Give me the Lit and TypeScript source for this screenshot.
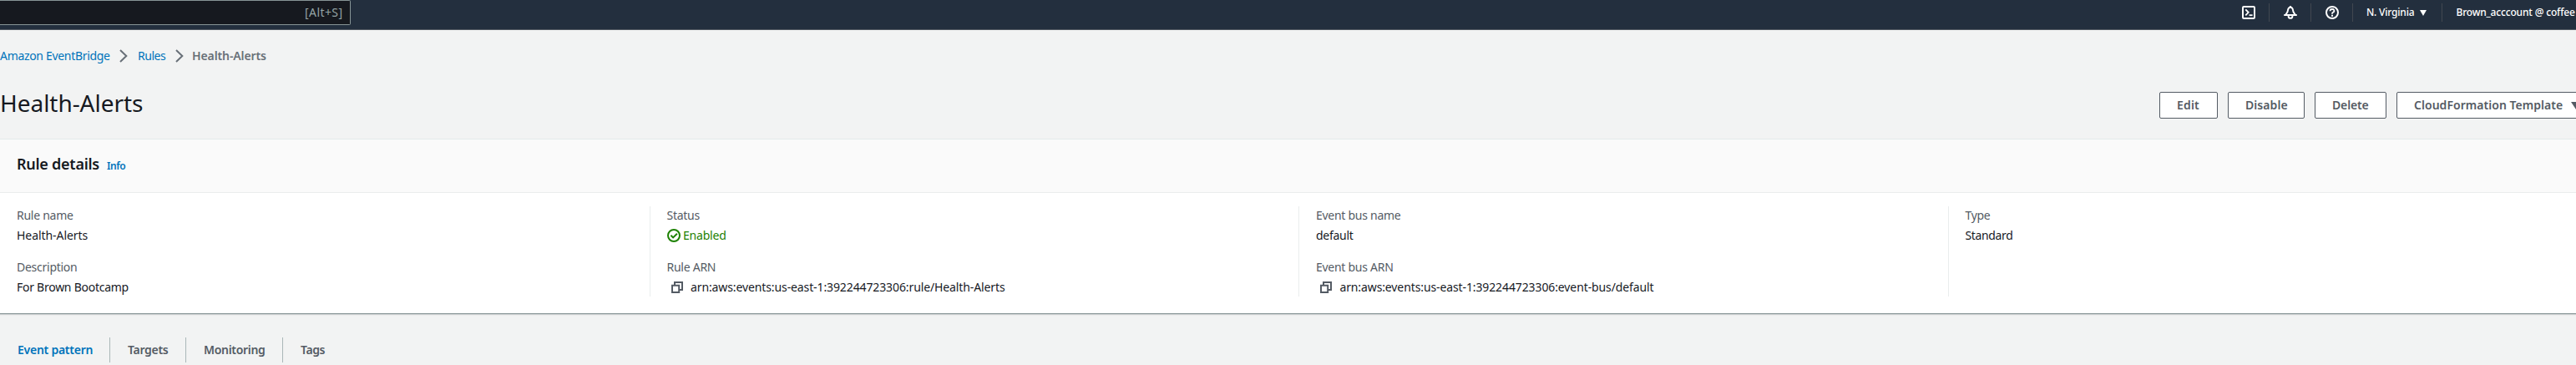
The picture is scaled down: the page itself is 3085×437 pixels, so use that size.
import { LitElement, html, css, svg, TemplateResult } from 'lit';
import { customElement } from 'lit/decorators.js';

const chevron = html`<svg class="chevron" width="10" height="16" viewBox="0 0 10 16" fill="none" stroke="#687078" stroke-width="2"><path d="M1 1l7.3 7L1 15"/></svg>`;
const icon = (body: TemplateResult) => html`<svg class="icon" width="16" height="16" viewBox="0 0 16 16" fill="none" stroke="currentColor" stroke-width="2">${body}</svg>`;
const terminal = icon(svg`<rect x="1" y="1" width="14" height="14" rx="1.2"/><path d="M4.3 4.3L7.7 7.8 4.3 11.3" stroke-width="1.8"/><path d="M8.6 11.2h4" stroke-width="1.8"/>`);
const bell = icon(svg`<path d="M8 1.8C5.6 1.8 5.1 3.8 4.8 6 4.5 8.2 3 9 2 11h12c-1-2-2.5-2.8-2.8-5C10.9 3.8 10.4 1.8 8 1.8z" stroke-width="1.9"/><path d="M0.3 11h15.4M8 0v2" stroke-width="1.8"/><path d="M5.6 11.4v1a2.4 2.4 0 0 0 4.8 0v-1" stroke-width="1.9"/>`);
const help = icon(svg`<circle cx="8" cy="8" r="7"/><path d="M5.5 6.2C5.5 4.7 6.5 4 8 4s2.5.8 2.5 2S9.4 7.7 8.6 8C8.1 8.2 8 8.6 8 9.7" stroke-width="1.8"/><path d="M7 10.8h2v2H7z" fill="currentColor" stroke="none"/>`);
const check = icon(svg`<circle cx="8" cy="8" r="7"/><path d="M4.4 7.8l2.7 2.6 4.8-4.6"/>`);
const copy = html`<svg class="copy" width="14" height="14" viewBox="0 0 14 14" fill="none" stroke="#545b64" stroke-width="2"><path d="M1 4.8h8.2V13H1z"/><path d="M4 4.5V1h9v9H9.5"/></svg>`;

@customElement('app-root')
export class AppRoot extends LitElement {
  static styles = css`
    :host { display: block; width: 100%; height: 437px; overflow: hidden; background: #f2f3f3; color: #16191f;
      font: 14px/22px "Noto Sans", sans-serif; white-space: nowrap; }
    * { box-sizing: border-box; }
    svg { display: block; flex: none; }
    h1, h2 { margin: 0; }
    .nav { display: flex; height: 36px; background: #232f3e; border-bottom: 1px solid #545b64; color: #fff; }
    .search { width: 420px; height: 30px; padding: 3px 8.5px 0 0; text-align: right; background: #16191f;
      border: 1px solid #879596; border-left: 0; border-radius: 0 2px 2px 0; color: #95a5a6; letter-spacing: .43px; }
    .tools { display: flex; width: 417px; height: 22px; margin: 4px 0 0 auto; font-size: 12px; font-weight: 500; line-height: 22px; }
    .tool { display: flex; flex: none; width: 50px; padding: 3px 0 0 17px; border-right: 1px solid #414750; }
    .region { display: flex; flex: none; width: 107px; padding-left: 16px; border-right: 1px solid #414750; letter-spacing: -.2px; }
    .region svg { margin: 8px 0 0 7px; }
    .account { padding-left: 16.5px; letter-spacing: -.18px; }
    .crumbs { display: flex; height: 58px; padding-top: 20px; color: #0073bb; }
    .crumb { letter-spacing: -.32px; }
    .chevron { margin: 3px 12px 0 11px; }
    .rules { width: 34px; letter-spacing: -.47px; }
    .current { margin-left: -2px; color: #687078; font-weight: 600; letter-spacing: -.11px; }
    .first { width: 132px; }
    .head { display: flex; justify-content: space-between; height: 72px; }
    .title { padding-top: 11px; font-size: 28px; font-weight: 400; line-height: 36px; letter-spacing: -.04px; }
    .actions { display: flex; gap: 12px; width: 499px; padding-top: 16px; }
    .btn { display: flex; flex: none; height: 32px; padding: 4px 0 0 20px; border: 1px solid #545b64; border-radius: 2px; background: #fff;
      color: #545b64; font-weight: 600; }
    .edit { width: 70px; letter-spacing: .15px; }
    .disable { width: 92px; letter-spacing: .08px; }
    .delete { width: 86px; letter-spacing: -.15px; }
    .template { width: 244px; letter-spacing: .04px; }
    .template svg { margin: 7px 0 0 10px; }
    .panel { height: 210px; background: #fff; border-top: 1px solid #e3ebea; border-bottom: 1px solid #879596; box-shadow: 0 1px 1px rgba(0,28,36,.15); }
    .panel-head { display: flex; align-items: baseline; height: 64px; padding: 17px 0 0 20px; background: #fafafa; border-bottom: 1px solid #eaeded; }
    .panel-title { font-size: 18px; font-weight: 600; line-height: 24px; letter-spacing: -.26px; }
    .info { margin-left: 9px; color: #0073bb; font-size: 12px; font-weight: 600; letter-spacing: -.45px; }
    .columns { display: grid; grid-template-columns: 778px 777.4px 777.6px 1fr; padding-top: 16px; }
    .column { display: grid; align-content: start; gap: 16px; height: 108px; padding-left: 20px; letter-spacing: -.26px; }
    .column + .column { padding-left: 19.5px; border-left: 1px solid #eaeded; }
    .label { margin-bottom: 2px; color: #545b64; }
    .value { display: flex; height: 22px; }
    .loose { letter-spacing: -.06px; }
    .tight { letter-spacing: -.36px; }
    .arn { padding-left: 5px; letter-spacing: -.11px; }
    .arn svg { margin: 4px 9.5px 0 0; }
    .ok { color: #1d8102; letter-spacing: -.2px; }
    .ok svg { margin: 3px 3.5px 0 0; }
    .tabs { display: flex; height: 30px; margin-top: 28px; color: #545b64; font-weight: 600; line-height: 22px; letter-spacing: -.31px; }
    .tab { padding: 4px 0 0 21px; width: 116px; border-right: 1px solid #aab7b8; }
    .tab.active { width: 132px; color: #0073bb; letter-spacing: -.25px; }
    .tab.targets { width: 91px; }
    .tab.last { border: 0; letter-spacing: -.43px; }
  `;

  private pair(label: string, value: unknown, kind = '') {
    return html`<div><div class="label">${label}</div><div class="value ${kind}">${value}</div></div>`;
  }

  render() {
    return html`
      <header class="nav">
        <div class="search">[Alt+S]</div>
        <div class="tools">
          <div class="tool">${terminal}</div><div class="tool">${bell}</div><div class="tool">${help}</div>
          <div class="region">N. Virginia<svg width="8" height="7" viewBox="0 0 8 7"><path d="M0 0h8L4 7z" fill="#fff"/></svg></div>
          <div class="account">Brown_acccount @ coffee</div>
        </div>
      </header>
      <nav class="crumbs">
        <span class="crumb first">Amazon EventBridge</span>${chevron}
        <span class="rules">Rules</span>${chevron}
        <span class="current">Health-Alerts</span>
      </nav>
      <div class="head">
        <h1 class="title">Health-Alerts</h1>
        <div class="actions">
          <div class="btn edit">Edit</div><div class="btn disable">Disable</div><div class="btn delete">Delete</div>
          <div class="btn template">CloudFormation Template<svg width="12" height="9" viewBox="0 0 12 9"><path d="M0 0h12L6 9z" fill="#545b64"/></svg></div>
        </div>
      </div>
      <section class="panel">
        <div class="panel-head"><h2 class="panel-title">Rule details</h2><span class="info">Info</span></div>
        <div class="columns">
          <div class="column">${this.pair('Rule name', 'Health-Alerts', 'loose')}${this.pair('Description', 'For Brown Bootcamp')}</div>
          <div class="column">${this.pair('Status', html`${check}Enabled`, 'ok')}${this.pair('Rule ARN', html`${copy}arn:aws:events:us-east-1:392244723306:rule/Health-Alerts`, 'arn')}</div>
          <div class="column">${this.pair('Event bus name', 'default')}${this.pair('Event bus ARN', html`${copy}arn:aws:events:us-east-1:392244723306:event-bus/default`, 'arn')}</div>
          <div class="column tight">${this.pair('Type', 'Standard')}</div>
        </div>
      </section>
      <div class="tabs">
        <div class="tab active">Event pattern</div><div class="tab targets">Targets</div><div class="tab">Monitoring</div><div class="tab last">Tags</div>
      </div>`;
  }
}
